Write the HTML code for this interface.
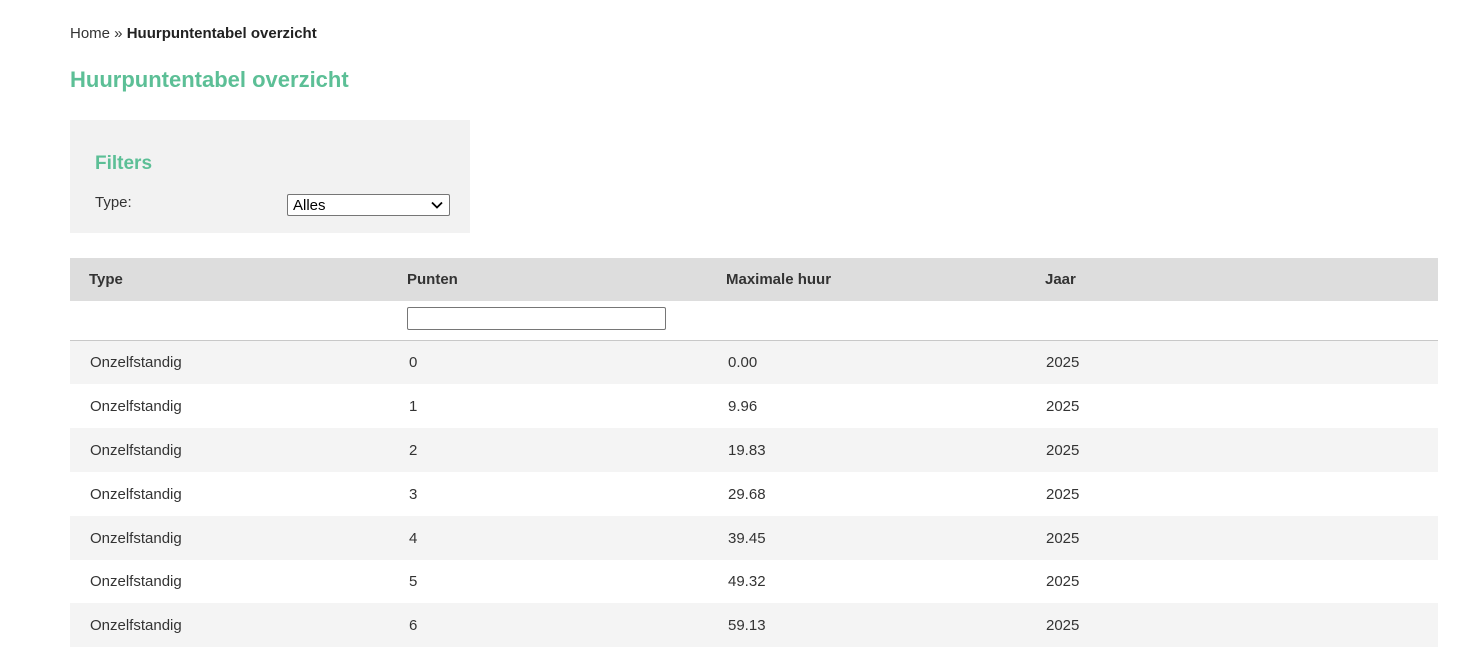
<!DOCTYPE html>
<html><head><meta charset="utf-8"><style>
body{margin:0;background:#fff;font-family:"Liberation Sans",sans-serif;color:#333;width:1480px;height:659px;overflow:hidden;position:relative}
.a{position:absolute}
.crumb{left:70px;top:25px;font-size:15px;color:#333}
.crumb b{color:#222;font-weight:600}
h1{position:absolute;left:70px;top:67px;margin:0;font-size:22px;color:#5cbf96;font-weight:bold}
.filt{left:70px;top:120px;width:400px;height:113px;background:#f2f2f2}
.filt h2{position:absolute;left:25px;top:33px;margin:0;font-size:19px;color:#5cbf96}
.filt .lbl{position:absolute;left:25px;top:74px;font-size:15px;color:#333}
.sel{position:absolute;left:217px;top:74px;width:161px;height:20px;border:1px solid #767676;border-radius:2px;background:#fff;font-size:15px;color:#000;box-sizing:content-box}
.sel span{position:absolute;left:5px;top:2px}
.sel svg{position:absolute;right:6px;top:6px}
.hdr{left:70px;top:258px;width:1368px;height:43px;background:#dddddd}
.row{left:70px;width:1368px;height:44px}
.c{position:absolute;font-size:15px;top:14px}
.hdr .c{font-weight:bold;top:13px;color:#333}
.inp{left:407px;top:307px;width:257px;height:21px;border:1px solid #767676;border-radius:2px}
.line{left:70px;top:340px;width:1368px;height:1px;background:#c8c8c8}
</style></head><body>
<div class="a crumb">Home » <b>Huurpuntentabel overzicht</b></div>
<h1>Huurpuntentabel overzicht</h1>
<div class="a filt"><h2>Filters</h2><div class="lbl">Type:</div>
<div class="sel"><span>Alles</span><svg width="12" height="8" viewBox="0 0 12 8"><path d="M1 1.5L6 6.5L11 1.5" stroke="#000" stroke-width="1.8" fill="none"/></svg></div></div>
<div class="a hdr"><span class="c" style="left:19px">Type</span><span class="c" style="left:337px">Punten</span><span class="c" style="left:656px">Maximale huur</span><span class="c" style="left:975px">Jaar</span></div>
<div class="a inp"></div>
<div class="a line"></div>
<div class="a row" style="top:341px;height:43px;background:#f4f4f4"><span class="c" style="left:20px;top:13px">Onzelfstandig</span><span class="c" style="left:339px;top:13px">0</span><span class="c" style="left:658px;top:13px">0.00</span><span class="c" style="left:976px;top:13px">2025</span></div>
<div class="a row" style="top:384px"><span class="c" style="left:20px">Onzelfstandig</span><span class="c" style="left:339px">1</span><span class="c" style="left:658px">9.96</span><span class="c" style="left:976px">2025</span></div>
<div class="a row" style="top:428px;background:#f4f4f4"><span class="c" style="left:20px">Onzelfstandig</span><span class="c" style="left:339px">2</span><span class="c" style="left:658px">19.83</span><span class="c" style="left:976px">2025</span></div>
<div class="a row" style="top:472px"><span class="c" style="left:20px">Onzelfstandig</span><span class="c" style="left:339px">3</span><span class="c" style="left:658px">29.68</span><span class="c" style="left:976px">2025</span></div>
<div class="a row" style="top:516px;background:#f4f4f4"><span class="c" style="left:20px">Onzelfstandig</span><span class="c" style="left:339px">4</span><span class="c" style="left:658px">39.45</span><span class="c" style="left:976px">2025</span></div>
<div class="a row" style="top:559px"><span class="c" style="left:20px">Onzelfstandig</span><span class="c" style="left:339px">5</span><span class="c" style="left:658px">49.32</span><span class="c" style="left:976px">2025</span></div>
<div class="a row" style="top:603px;background:#f4f4f4"><span class="c" style="left:20px">Onzelfstandig</span><span class="c" style="left:339px">6</span><span class="c" style="left:658px">59.13</span><span class="c" style="left:976px">2025</span></div>
</body></html>
